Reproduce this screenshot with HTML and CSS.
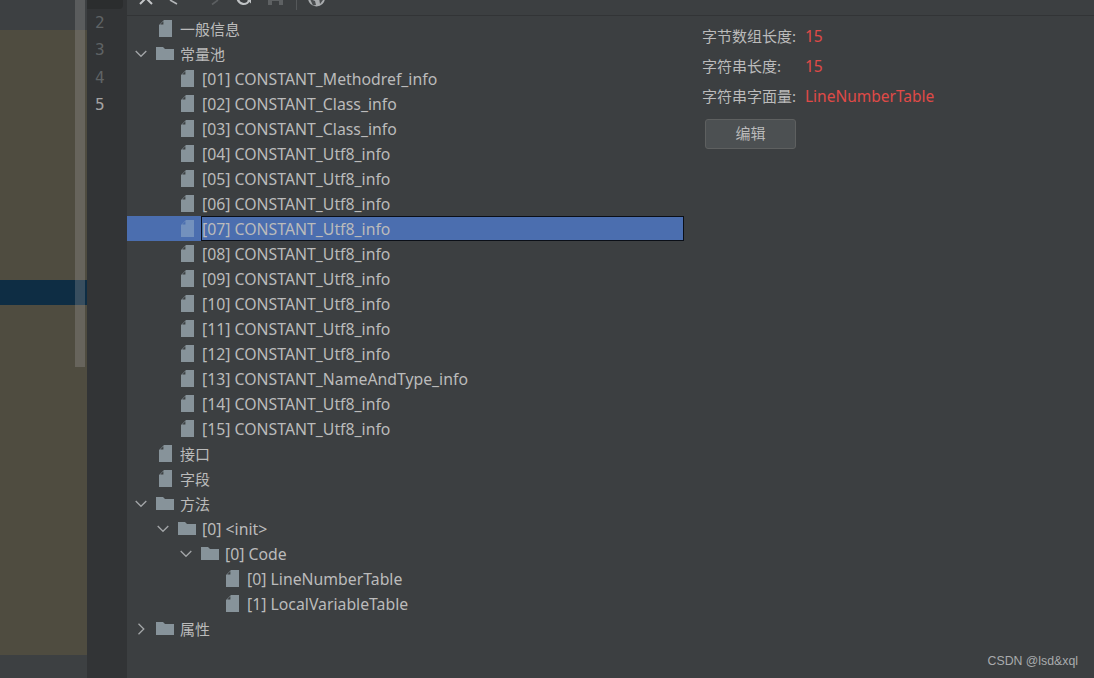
FILE: index.html
```html
<!DOCTYPE html>
<html lang="zh-CN">
<head>
  <meta charset="UTF-8">
  <title>jclasslib</title>
  <link rel="stylesheet" href="styles.css">
</head>
<body>
  <svg class="defs" width="0" height="0">
    <symbol id="file" viewBox="0 0 13 17">
      <path d="M5 0 H13 V17 H0 V5 Z M4.4 1.2 L1.2 4.4 H4.4 Z" fill="currentColor" fill-rule="evenodd"/>
    </symbol>
    <symbol id="folder" viewBox="0 0 18 13">
      <path d="M0 0 H7 L9 2 H18 V13 H0 Z" fill="#87939a"/>
    </symbol>
    <symbol id="open" viewBox="0 0 12 12">
      <path d="M.7 3 L6 8.3 L11.3 3" fill="none" stroke="#a3a6a8" stroke-width="1.3"/>
    </symbol>
    <symbol id="closed" viewBox="0 0 12 12">
      <path d="M3.5 .7 L8.8 6 L3.5 11.3" fill="none" stroke="#a3a6a8" stroke-width="1.3"/>
    </symbol>
  </svg>

  <div class="editor">
    <div class="code-bg">
      <div class="plain-top"></div>
      <div class="olive-a"></div>
      <div class="current"></div>
      <div class="olive-b"></div>
      <div class="plain-bottom"></div>
    </div>
    <div class="scroll-thumb"></div>
  </div>

  <div class="gutter">
    <div class="tab-stub"></div>
    <div class="line-no">2</div>
    <div class="line-no">3</div>
    <div class="line-no">4</div>
    <div class="line-no active">5</div>
  </div>

  <div class="panel">
    <div class="toolbar">
      <svg class="tools" width="210" height="15" viewBox="0 0 210 15">
        <path d="M13 -8 L25 4 M25 -8 L13 4" stroke="#c4c6c8" stroke-width="2" fill="none"/>
        <path d="M43 0 L50 4" stroke="#b4b7b9" stroke-width="1.6" fill="none"/>
        <path d="M91 0 L85 4.5" stroke="#5c5f61" stroke-width="1.6" fill="none"/>
        <path d="M122.5 -1 A6 6 0 1 1 116.5 -8 M111 -2 A5.8 5.8 0 0 0 122.3 0" stroke="#c0c3c5" stroke-width="2.2" fill="none"/>
        <path d="M118 -2 H124 V3.5 Z" fill="#c0c3c5"/>
        <path d="M141 -3 H156 V5 H152 V1 H145 V5 H141 Z" fill="#5e6163"/>
        <path d="M169.5 0 V10" stroke="#55585a"/>
        <circle cx="189.5" cy="-2" r="8.5" fill="#a9acae"/>
        <path d="M183 -1 L188 1 L189 5 L186 5.5 Z M192 -2 L196 0 L193 4 Z" fill="#4a4d4f"/>
      </svg>
    </div>

    <div class="content">
      <div class="tree">
        <div class="row lv0"><span class="arrow"></span><svg class="ico-file"><use href="#file"/></svg><span class="label cn">一般信息</span></div>
        <div class="row lv0"><svg class="arrow"><use href="#open"/></svg><svg class="ico-folder"><use href="#folder"/></svg><span class="label cn">常量池</span></div>
        <div class="row lv1"><span class="arrow"></span><svg class="ico-file"><use href="#file"/></svg><span class="label">[01] CONSTANT_Methodref_info</span></div>
        <div class="row lv1"><span class="arrow"></span><svg class="ico-file"><use href="#file"/></svg><span class="label">[02] CONSTANT_Class_info</span></div>
        <div class="row lv1"><span class="arrow"></span><svg class="ico-file"><use href="#file"/></svg><span class="label">[03] CONSTANT_Class_info</span></div>
        <div class="row lv1"><span class="arrow"></span><svg class="ico-file"><use href="#file"/></svg><span class="label">[04] CONSTANT_Utf8_info</span></div>
        <div class="row lv1"><span class="arrow"></span><svg class="ico-file"><use href="#file"/></svg><span class="label">[05] CONSTANT_Utf8_info</span></div>
        <div class="row lv1"><span class="arrow"></span><svg class="ico-file"><use href="#file"/></svg><span class="label">[06] CONSTANT_Utf8_info</span></div>
        <div class="row lv1 selected"><span class="arrow"></span><svg class="ico-file"><use href="#file"/></svg><span class="label">[07] CONSTANT_Utf8_info</span></div>
        <div class="row lv1"><span class="arrow"></span><svg class="ico-file"><use href="#file"/></svg><span class="label">[08] CONSTANT_Utf8_info</span></div>
        <div class="row lv1"><span class="arrow"></span><svg class="ico-file"><use href="#file"/></svg><span class="label">[09] CONSTANT_Utf8_info</span></div>
        <div class="row lv1"><span class="arrow"></span><svg class="ico-file"><use href="#file"/></svg><span class="label">[10] CONSTANT_Utf8_info</span></div>
        <div class="row lv1"><span class="arrow"></span><svg class="ico-file"><use href="#file"/></svg><span class="label">[11] CONSTANT_Utf8_info</span></div>
        <div class="row lv1"><span class="arrow"></span><svg class="ico-file"><use href="#file"/></svg><span class="label">[12] CONSTANT_Utf8_info</span></div>
        <div class="row lv1"><span class="arrow"></span><svg class="ico-file"><use href="#file"/></svg><span class="label">[13] CONSTANT_NameAndType_info</span></div>
        <div class="row lv1"><span class="arrow"></span><svg class="ico-file"><use href="#file"/></svg><span class="label">[14] CONSTANT_Utf8_info</span></div>
        <div class="row lv1"><span class="arrow"></span><svg class="ico-file"><use href="#file"/></svg><span class="label">[15] CONSTANT_Utf8_info</span></div>
        <div class="row lv0"><span class="arrow"></span><svg class="ico-file"><use href="#file"/></svg><span class="label cn">接口</span></div>
        <div class="row lv0"><span class="arrow"></span><svg class="ico-file"><use href="#file"/></svg><span class="label cn">字段</span></div>
        <div class="row lv0"><svg class="arrow"><use href="#open"/></svg><svg class="ico-folder"><use href="#folder"/></svg><span class="label cn">方法</span></div>
        <div class="row lv1"><svg class="arrow"><use href="#open"/></svg><svg class="ico-folder"><use href="#folder"/></svg><span class="label">[0] &lt;init&gt;</span></div>
        <div class="row lv2"><svg class="arrow"><use href="#open"/></svg><svg class="ico-folder"><use href="#folder"/></svg><span class="label">[0] Code</span></div>
        <div class="row lv3"><span class="arrow"></span><svg class="ico-file"><use href="#file"/></svg><span class="label">[0] LineNumberTable</span></div>
        <div class="row lv3"><span class="arrow"></span><svg class="ico-file"><use href="#file"/></svg><span class="label">[1] LocalVariableTable</span></div>
        <div class="row lv0"><svg class="arrow"><use href="#closed"/></svg><svg class="ico-folder"><use href="#folder"/></svg><span class="label cn">属性</span></div>
      </div>

      <div class="detail">
        <div class="field"><span class="field-name">字节数组长度:</span><span class="field-value">15</span></div>
        <div class="field"><span class="field-name">字符串长度:</span><span class="field-value">15</span></div>
        <div class="field"><span class="field-name">字符串字面量:</span><span class="field-value">LineNumberTable</span></div>
        <button class="edit-btn">编辑</button>
      </div>
    </div>

    <div class="watermark">CSDN @lsd&amp;xql</div>
  </div>
</body>
</html>
```

FILE: styles.css
```css
html, body {
  margin: 0;
  padding: 0;
  height: 100%;
}

body {
  width: 1094px;
  height: 678px;
  overflow: hidden;
  display: flex;
  background: #3c3f41;
  color: #bbbbbb;
  font-family: "Noto Sans", "Noto Sans CJK SC", sans-serif;
  font-size: 15.8px;
}

.defs {
  position: absolute;
}

/* left code pane */
.editor {
  position: relative;
  width: 87px;
  flex: none;
}

.code-bg {
  display: flex;
  flex-direction: column;
  height: 100%;
}

.plain-top { height: 30px; background: #3d4042; }
.olive-a { height: 250px; background: #4f4c40; }
.current { height: 25px; background: #0e2d44; }
.olive-b { height: 350px; background: #4f4c40; }
.plain-bottom { flex: 1; background: #3d4042; }

.scroll-thumb {
  position: absolute;
  left: 75px;
  top: 0;
  width: 10px;
  height: 367px;
  background: rgba(166, 166, 166, 0.28);
}

/* line numbers */
.gutter {
  width: 40px;
  flex: none;
  background: #323436;
}

.tab-stub {
  height: 9px;
  width: 36px;
  background: #2b2d2e;
  border-radius: 0 0 4px 0;
}

.line-no {
  height: 27.3px;
  line-height: 27px;
  padding-left: 8px;
  font-family: "DejaVu Sans Mono", monospace;
  font-size: 16px;
  color: #5f6365;
}

.line-no.active {
  color: #a4a3a3;
}

/* right panel */
.panel {
  position: relative;
  flex: 1;
  min-width: 0;
  display: flex;
  flex-direction: column;
}

.toolbar {
  height: 15px;
  flex: none;
  border-bottom: 1px solid #323436;
  overflow: hidden;
}

.tools {
  display: block;
}

.content {
  display: flex;
}

.tree {
  width: 557px;
  flex: none;
}

.row {
  height: 25px;
  display: flex;
  align-items: center;
  white-space: nowrap;
}

.lv0 { padding-left: 8px; }
.lv1 { padding-left: 30px; }
.lv2 { padding-left: 53px; }
.lv3 { padding-left: 75px; }

.arrow {
  width: 12px;
  height: 12px;
  flex: none;
}

.ico-file {
  width: 13px;
  height: 17px;
  margin: 0 7px 0 12px;
  flex: none;
  color: #87939a;
}

.ico-folder {
  width: 18px;
  height: 13px;
  margin: 0 5px 0 9px;
  flex: none;
}

.label {
  padding: 1px 1px 0;
  line-height: 23px;
}

.label.cn {
  font-size: 15px;
}

.selected {
  background: #4b6eaf;
}

.selected .ico-file {
  color: #7391bd;
}

.selected .label {
  flex: 1;
  border: 1px solid #0b0f17;
  padding: 0;
  line-height: 24px;
  height: 23px;
}

/* field details */
.detail {
  padding: 5px 0 0 18px;
  flex: 1;
}

.field {
  height: 30px;
  display: flex;
  align-items: center;
  font-size: 15px;
}

.field-name {
  width: 103px;
  padding-bottom: 2px;
  flex: none;
}

.field-value {
  color: #e04a47;
  font-size: 15.5px;
}

.edit-btn {
  display: block;
  width: 91px;
  height: 30px;
  margin: 8px 0 0 3px;
  padding: 0 0 3px;
  background: #4c5052;
  border: 1px solid #5e6060;
  border-radius: 3px;
  color: #bbbbbb;
  font: inherit;
  font-size: 15px;
}

.watermark {
  position: absolute;
  right: 16px;
  bottom: 10px;
  font-family: "Liberation Sans", sans-serif;
  font-size: 12.3px;
  color: #a9abad;
}
```
